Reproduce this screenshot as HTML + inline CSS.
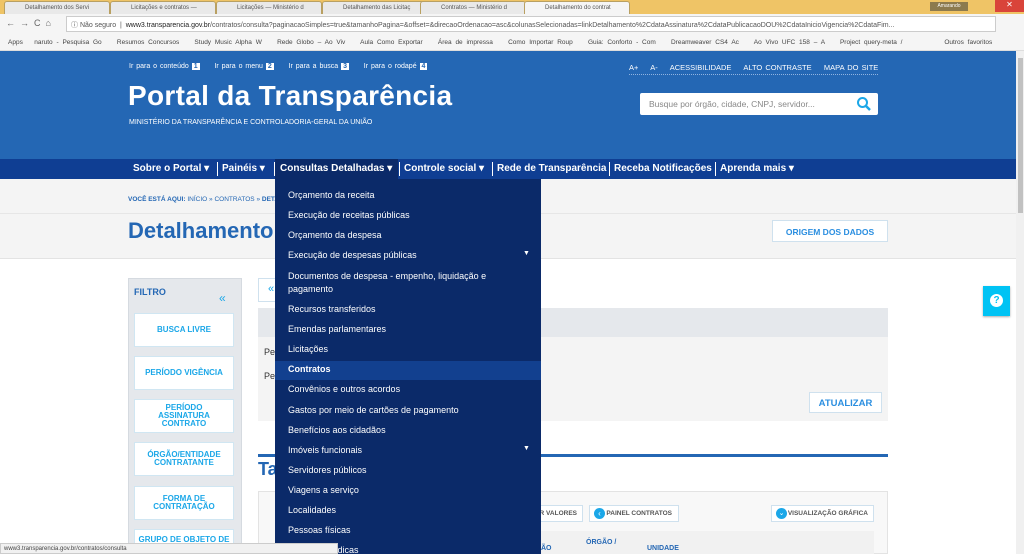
<!DOCTYPE html>
<html><head><meta charset="utf-8"><style>
*{margin:0;padding:0;box-sizing:border-box}
body{width:1024px;height:554px;overflow:hidden;font-family:"Liberation Sans",sans-serif;background:#fff;position:relative}
.a{position:absolute}
.tabbar{left:0;top:0;width:1024px;height:14px;background:#efc466}
.tab{top:1px;height:13px;width:106px;background:#e9e9e9;border:1px solid #b9a062;border-bottom:none;font-size:6px;color:#555;padding:3px 0 0 20px;white-space:nowrap;overflow:hidden;border-radius:3px 3px 0 0}
.addr{left:0;top:14px;width:1024px;height:20px;background:#f5f5f5}
.url{left:66px;top:16px;width:930px;height:16px;background:#fff;border:1px solid #ccc;font-size:7px;color:#555;padding:3px 0 0 4px;white-space:nowrap;overflow:hidden}
.bm{left:0;top:34px;width:1024px;height:17px;background:#f5f5f5;border-bottom:1px solid #ddd;font-size:6.5px;color:#444;white-space:nowrap;padding:5px 0 0 8px;word-spacing:2px}
.hdr{left:0;top:51px;width:1016px;height:108px;background:#2467b4}
.nav{left:0;top:159px;width:1016px;height:20px;background:#0f3e93}
.nav span{position:absolute;top:4px;font-size:10px;font-weight:bold;color:#fff;white-space:nowrap}
.sep{position:absolute;top:3px;width:1px;height:14px;background:#fff}
.crumb{left:0;top:179px;width:1016px;height:80px;background:#f4f4f4;border-bottom:1px solid #e3e3e3}
.dd{left:275px;top:179px;width:266px;height:375px;background:#0b2a69}
.dd div{position:absolute;left:13px;font-size:9px;color:#fff;white-space:nowrap}
.filt{left:128px;top:278px;width:114px;height:276px;background:#e5e8ec;border:1px solid #d5dae0;overflow:hidden}
.fb{position:absolute;left:5px;width:100px;height:34px;background:#fff;border:1px solid #d0e6f2;color:#1ba7e8;font-size:8px;font-weight:bold;text-align:center;display:flex;align-items:center;justify-content:center;line-height:8px}
.btn{background:#fff;border:1px solid #cfe1ee;color:#2a8ee0;font-weight:bold;text-align:center}
</style></head><body>
<div class="a tabbar"></div>
<div class="a tab" style="left:4px">Detalhamento dos Servi</div>
<div class="a tab" style="left:110px">Licitações e contratos —</div>
<div class="a tab" style="left:216px">Licitações — Ministério d</div>
<div class="a tab" style="left:322px">Detalhamento das Licitaç</div>
<div class="a tab" style="left:420px">Contratos — Ministério d</div>
<div class="a tab" style="left:524px;background:#f5f5f5">Detalhamento do contrat</div>
<div class="a" style="left:930px;top:2px;width:38px;height:9px;background:#8c7a4e;font-size:5px;color:#fff;text-align:center;padding-top:1px">Amarando</div>
<div class="a" style="left:995px;top:0;width:29px;height:12px;background:#d9443a;color:#fff;font-size:8px;text-align:center">✕</div>
<div class="a addr"></div>
<div class="a" style="left:6px;top:18px;font-size:9px;color:#666">←&nbsp;&nbsp;→&nbsp;&nbsp;C&nbsp;&nbsp;⌂</div>
<div class="a url">ⓘ Não seguro &nbsp;|&nbsp; <span style="color:#222">www3.transparencia.gov.br</span>/contratos/consulta?paginacaoSimples=true&amp;tamanhoPagina=&amp;offset=&amp;direcaoOrdenacao=asc&amp;colunasSelecionadas=linkDetalhamento%2CdataAssinatura%2CdataPublicacaoDOU%2CdataInicioVigencia%2CdataFim...</div>
<div class="a bm">Apps &nbsp; naruto - Pesquisa Go &nbsp;&nbsp; Resumos Concursos &nbsp;&nbsp; Study Music Alpha W &nbsp;&nbsp; Rede Globo – Ao Viv &nbsp;&nbsp; Aula Como Exportar &nbsp;&nbsp; Área de impressa &nbsp;&nbsp; Como Importar Roup &nbsp;&nbsp; Guia: Conforto - Com &nbsp;&nbsp; Dreamweaver CS4 Ac &nbsp;&nbsp; Ao Vivo UFC 158 – A &nbsp;&nbsp; Project query-meta / &nbsp;&nbsp;&nbsp;&nbsp;&nbsp;&nbsp;&nbsp;&nbsp;&nbsp; Outros favoritos</div>
<div class="a" style="left:1016px;top:51px;width:8px;height:503px;background:#f0f0f0"></div>
<div class="a" style="left:1018px;top:58px;width:5px;height:155px;background:#c1c1c1"></div>
<div class="a hdr"></div>
<div class="a" style="left:129px;top:63px;font-size:7px;color:#fff;white-space:nowrap;word-spacing:1px">Ir para o conteúdo <b style="background:#fff;color:#2467b4;padding:0 2px">1</b>&nbsp;&nbsp;&nbsp;&nbsp; Ir para o menu <b style="background:#fff;color:#2467b4;padding:0 2px">2</b>&nbsp;&nbsp;&nbsp;&nbsp; Ir para a busca <b style="background:#fff;color:#2467b4;padding:0 2px">3</b>&nbsp;&nbsp;&nbsp;&nbsp; Ir para o rodapé <b style="background:#fff;color:#2467b4;padding:0 2px">4</b></div>
<div class="a" style="left:128px;top:80px;font-size:28px;font-weight:bold;color:#fff;white-space:nowrap;letter-spacing:0.3px">Portal da Transparência</div>
<div class="a" style="left:129px;top:119px;font-size:7px;color:#fff;white-space:nowrap">MINISTÉRIO DA TRANSPARÊNCIA E CONTROLADORIA-GERAL DA UNIÃO</div>
<div class="a" style="left:629px;top:63px;font-size:7.5px;color:#fff;white-space:nowrap;word-spacing:1px;border-bottom:1px dotted #8fb3e0;padding-bottom:2px">A+ &nbsp;&nbsp; A- &nbsp;&nbsp; ACESSIBILIDADE &nbsp;&nbsp; ALTO CONTRASTE &nbsp;&nbsp; MAPA DO SITE</div>
<div class="a" style="left:640px;top:93px;width:238px;height:22px;background:#fff;border-radius:2px;font-size:8.5px;color:#888;padding:6px 0 0 9px">Busque por órgão, cidade, CNPJ, servidor...</div>
<svg class="a" style="left:856px;top:96px" width="16" height="16" viewBox="0 0 16 16"><circle cx="6.5" cy="6.5" r="4.5" fill="none" stroke="#1ba7e8" stroke-width="2"/><path d="M10 10l4 4" stroke="#1ba7e8" stroke-width="2.5"/></svg>
<div class="a nav"></div>
<div class="a" style="left:275px;top:159px;width:123px;height:20px;background:#0b2a69"></div>
<div class="a nav" style="background:transparent">
<span style="left:133px">Sobre o Portal ▾</span><i class="sep" style="left:217px"></i>
<span style="left:222px">Painéis ▾</span><i class="sep" style="left:274px"></i>
<span style="left:280px">Consultas Detalhadas ▾</span><i class="sep" style="left:399px"></i>
<span style="left:404px">Controle social ▾</span><i class="sep" style="left:492px"></i>
<span style="left:497px">Rede de Transparência</span><i class="sep" style="left:609px"></i>
<span style="left:614px">Receba Notificações</span><i class="sep" style="left:715px"></i>
<span style="left:720px">Aprenda mais ▾</span></div>
<div class="a crumb"></div>
<div class="a" style="left:0;top:213px;width:1016px;height:1px;background:#e6e6e6"></div>
<div class="a" style="left:128px;top:196px;font-size:6.5px;color:#2467b4;white-space:nowrap"><b>VOCÊ ESTÁ AQUI:</b> INÍCIO » CONTRATOS » <b>DETA</b></div>
<div class="a" style="left:128px;top:218px;font-size:22px;font-weight:bold;color:#2467b4">Detalhamento</div>
<div class="a btn" style="left:772px;top:220px;width:116px;height:22px;font-size:8.5px;padding-top:6px">ORIGEM DOS DADOS</div>
<div class="a filt">
<div style="position:absolute;left:5px;top:8px;font-size:9px;font-weight:bold;color:#2467b4">FILTRO</div>
<div style="position:absolute;left:90px;top:12px;font-size:12px;color:#1ba7e8">«</div>
<div class="fb" style="top:34px">BUSCA LIVRE</div>
<div class="fb" style="top:77px">PERÍODO VIGÊNCIA</div>
<div class="fb" style="top:120px">PERÍODO<br>ASSINATURA<br>CONTRATO</div>
<div class="fb" style="top:163px">ÓRGÃO/ENTIDADE<br>CONTRATANTE</div>
<div class="fb" style="top:207px">FORMA DE<br>CONTRATAÇÃO</div>
<div class="fb" style="top:250px;align-items:flex-start;padding-top:6px">GRUPO DE OBJETO DE</div>
</div>
<div class="a" style="left:258px;top:278px;width:30px;height:24px;background:#fff;border:1px solid #cfe1ee;color:#1ba7e8;font-size:11px;padding:4px 0 0 9px">«</div>
<div class="a" style="left:258px;top:308px;width:630px;height:29px;background:#e5e8ec"></div>
<div class="a" style="left:258px;top:337px;width:630px;height:84px;background:#f4f4f4"></div>
<div class="a" style="left:264px;top:347px;font-size:9px;color:#333">Pe</div>
<div class="a" style="left:264px;top:371px;font-size:9px;color:#333">Pe</div>
<div class="a btn" style="left:809px;top:392px;width:73px;height:21px;font-size:9.5px;padding-top:5px">ATUALIZAR</div>
<div class="a" style="left:258px;top:454px;width:630px;height:3px;background:#2467b4"></div>
<div class="a" style="left:258px;top:459px;font-size:18px;font-weight:bold;color:#2467b4">Ta</div>
<div class="a" style="left:258px;top:491px;width:630px;height:63px;background:#f8f8f8;border:1px solid #e3e3e3"></div>
<div class="a btn" style="left:520px;top:505px;width:63px;height:17px;font-size:6.5px;color:#555;padding-top:4px;text-align:right;padding-right:5px">R VALORES</div>
<div class="a btn" style="left:589px;top:505px;width:90px;height:17px;font-size:6.5px;color:#555;padding-top:4px;text-align:right;padding-right:6px">PAINEL CONTRATOS</div>
<div class="a" style="left:594px;top:508px;width:11px;height:11px;border-radius:50%;background:#1ba7e8;color:#fff;font-size:8px;line-height:11px;text-align:center">‹</div>
<div class="a btn" style="left:771px;top:505px;width:103px;height:17px;font-size:6.5px;color:#555;padding-top:4px;text-align:right;padding-right:5px">VISUALIZAÇÃO GRÁFICA</div>
<div class="a" style="left:776px;top:508px;width:11px;height:11px;border-radius:50%;background:#1ba7e8;color:#fff;font-size:7px;line-height:11px;text-align:center">⌄</div>
<div class="a" style="left:540px;top:531px;width:334px;height:23px;background:#f1f1f1"></div>
<div class="a" style="left:586px;top:539px;font-size:7px;font-weight:bold;color:#2467b4">ÓRGÃO /</div>
<div class="a" style="left:647px;top:545px;font-size:7px;font-weight:bold;color:#2467b4">UNIDADE</div>
<div class="a" style="left:541px;top:545px;font-size:7px;font-weight:bold;color:#2467b4">ÃO</div>
<div class="a" style="left:983px;top:286px;width:27px;height:30px;background:#00c3f4;box-shadow:0 1px 2px #aaa"></div>
<div class="a" style="left:990px;top:294px;width:13px;height:13px;border-radius:50%;background:#fff;color:#00c3f4;font-size:10px;font-weight:bold;text-align:center;line-height:13px">?</div>
<div class="a dd">
<div style="top:11px">Orçamento da receita</div>
<div style="top:31px">Execução de receitas públicas</div>
<div style="top:51px">Orçamento da despesa</div>
<div style="top:71px">Execução de despesas públicas</div>
<div style="top:71px;left:248px;font-size:7px">▼</div>
<div style="top:91px;line-height:13px">Documentos de despesa - empenho, liquidação e<br>pagamento</div>
<div style="top:125px">Recursos transferidos</div>
<div style="top:145px">Emendas parlamentares</div>
<div style="top:165px">Licitações</div>
<div style="top:182px;left:0;width:266px;height:19px;background:#12408f"></div>
<div style="top:185px;font-weight:bold">Contratos</div>
<div style="top:205px">Convênios e outros acordos</div>
<div style="top:226px">Gastos por meio de cartões de pagamento</div>
<div style="top:246px">Benefícios aos cidadãos</div>
<div style="top:266px">Imóveis funcionais</div>
<div style="top:266px;left:248px;font-size:7px">▼</div>
<div style="top:286px">Servidores públicos</div>
<div style="top:306px">Viagens a serviço</div>
<div style="top:326px">Localidades</div>
<div style="top:346px">Pessoas físicas</div>
<div style="top:366px">Pessoas jurídicas</div>
</div>
<div class="a" style="left:0;top:543px;width:338px;height:11px;background:#f1f1f1;border:1px solid #ccc;font-size:6px;color:#444;padding:2px 0 0 3px">www3.transparencia.gov.br/contratos/consulta</div>
</body></html>
